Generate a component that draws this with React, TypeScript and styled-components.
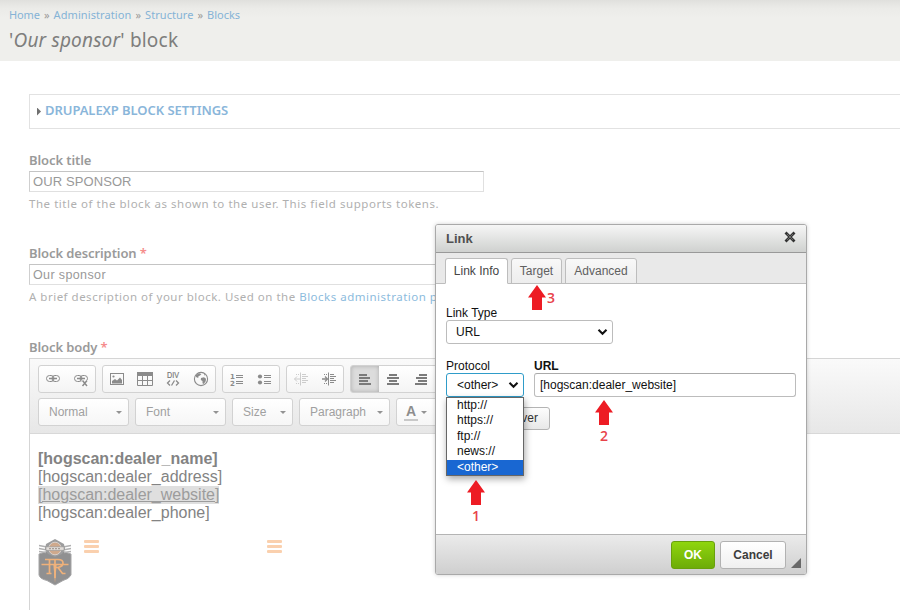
import React from 'react';
import styled, { createGlobalStyle, css } from 'styled-components';

const GlobalStyle = createGlobalStyle`
  *, *::before, *::after { box-sizing: border-box; }
  html, body { margin: 0; padding: 0; background: #fff; }
  body { width: 900px; height: 610px; overflow: hidden; }
`;

const humanist = `"Noto Sans", "Open Sans", sans-serif`;
const arial = `"Liberation Sans", Arial, sans-serif`;

/* ---------- page ---------- */

const Page = styled.div`
  position: relative;
  width: 900px;
  height: 610px;
  overflow: hidden;
  background: #fff;
  font-family: ${humanist};
  white-space: nowrap;
`;

const Header = styled.header`
  height: 61px;
  padding: 7px 9px 0;
  background: linear-gradient(#e0e0dd 0, #ebebe8 8px, #efefec 18px);
`;

const Breadcrumb = styled.nav`
  display: flex;
  gap: 4px;
  height: 15px;
  font-size: 11px;
  line-height: 15px;
  color: #9b9b99;
`;

const Crumb = styled.a<{ $spacing: number }>`
  color: #85b3d6;
  letter-spacing: ${(p) => p.$spacing}px;
`;

const PageTitle = styled.h1`
  margin: 5px 0 0;
  font-size: 19px;
  font-weight: 400;
  line-height: 27px;
  letter-spacing: 0.2px;
  color: #7e7e7d;
`;

const Form = styled.main`
  display: flex;
  flex-direction: column;
  padding: 33px 0 0 29px;
`;

const Fieldset = styled.section`
  display: flex;
  align-items: center;
  gap: 4px;
  height: 35px;
  padding: 0 0 3px 7px;
  border: 1px solid #e2e2e2;
  border-right: 0;
`;

const Triangle = styled.span`
  width: 4px;
  height: 8px;
  margin-top: 3px;
  background: #6f6f6f;
  clip-path: polygon(0 0, 100% 50%, 0 100%);
`;

const Legend = styled.span`
  font-size: 13px;
  font-weight: 600;
  line-height: 18px;
  letter-spacing: -0.06px;
  color: #8ab6da;
`;

const Field = styled.div<{ $gap: number }>`
  display: flex;
  flex-direction: column;
  margin-top: ${(p) => p.$gap}px;
`;

const Label = styled.label`
  height: 20px;
  font-size: 13px;
  font-weight: 600;
  line-height: 18px;
  letter-spacing: -0.1px;
  color: #9a9a9a;
`;

const Required = styled.span`
  color: #f58c8c;
`;

const TextInput = styled.div<{ $size: number; $spacing: number; $drop?: number }>`
  width: 455px;
  height: 21px;
  padding: ${(p) => p.$drop ?? 0}px 0 0 3px;
  border: 1px solid #e0e0e0;
  border-top-color: #c4c4c4;
  border-left-color: #cfcfcf;
  font: ${(p) => p.$size}px/19px ${arial};
  letter-spacing: ${(p) => p.$spacing}px;
  color: #999;
`;

const Description = styled.p<{ $spacing: number }>`
  height: 18px;
  margin: 3px 0 0;
  font-size: 11.5px;
  line-height: 18px;
  letter-spacing: ${(p) => p.$spacing}px;
  color: #b0b0b0;
`;

const DescLink = styled.a`
  color: #8cbbdd;
`;

/* ---------- rich text editor ---------- */

const Editor = styled.section`
  height: 300px;
  border: 1px solid #d5d5d5;
  border-right: 0;
`;

const ToolbarArea = styled.div`
  display: flex;
  flex-direction: column;
  gap: 5px;
  height: 75px;
  padding: 6px 8px 0;
  border-bottom: 1px solid #d8d8d8;
  background: linear-gradient(#fafafa, #e7e7e7);
`;

const ToolbarRow = styled.div`
  display: flex;
  gap: 6px;
  height: 28px;
`;

const ToolGroup = styled.div`
  display: flex;
  height: 28px;
  border: 1px solid #d2d2d2;
  border-radius: 3px;
  background: linear-gradient(#fff, #f4f4f4);
  overflow: hidden;
`;

const ToolButton = styled.span<{ $active?: boolean; $disabled?: boolean }>`
  display: flex;
  width: 28px;
  height: 26px;
  align-items: center;
  justify-content: center;
  opacity: ${(p) => (p.$disabled ? 0.4 : 1)};
  ${(p) =>
    p.$active &&
    css`
      background: #dcdcdc;
      box-shadow: inset 0 0 4px #aaa;
    `}
`;

const Combo = styled.div<{ $width: number }>`
  display: flex;
  align-items: center;
  justify-content: space-between;
  width: ${(p) => p.$width}px;
  height: 28px;
  padding: 0 6px 1px 10px;
  border: 1px solid #d2d2d2;
  border-radius: 3px;
  background: linear-gradient(#fff, #f6f6f6);
  font: 12px/26px ${arial};
  color: #a0a0a0;
`;

const ColorButton = styled(Combo)`
  justify-content: flex-start;
  gap: 3px;
  padding-left: 7px;
`;

const ColorLetter = styled.span`
  width: 14px;
  height: 18px;
  margin-top: 1px;
  border-bottom: 2px solid #c8c8c8;
  font: bold 14px/16px ${arial};
  text-align: center;
  color: #8d8d8d;
`;

const Caret = styled.span`
  margin-top: 2px;
  border: 3px solid transparent;
  border-top-color: #939393;
  border-bottom: 0;
`;

const EditorBody = styled.div`
  padding: 16px 8px;
  font: 16px/18px ${arial};
  color: #838383;
`;

const Line = styled.div<{ $bold?: boolean }>`
  height: 18px;
  font-weight: ${(p) => (p.$bold ? 700 : 400)};
`;

const SelectedText = styled.span`
  display: inline-block;
  height: 18px;
  background: #dfdfdf;
  color: #9c9c9c;
  text-decoration: underline;
`;

const MediaRow = styled.div`
  display: flex;
  align-items: flex-start;
  padding-top: 17px;
`;

const Burger = styled.span<{ $left: number }>`
  display: flex;
  flex-direction: column;
  gap: 2px;
  margin: 1px 0 0 ${(p) => p.$left}px;
`;

const BurgerBar = styled.i`
  width: 15px;
  height: 3px;
  border-radius: 1px;
  background: #fad0ae;
`;

/* ---------- dialog ---------- */

const Dialog = styled.section`
  position: absolute;
  left: 435px;
  top: 224px;
  display: flex;
  flex-direction: column;
  width: 372px;
  height: 351px;
  border: 1px solid #a9a9a9;
  border-radius: 3px;
  background: #fff;
  box-shadow: 0 0 4px rgba(0, 0, 0, 0.18);
  font: 12px/14px ${arial};
  color: #111;
`;

const DialogTitle = styled.header`
  display: flex;
  justify-content: space-between;
  height: 28px;
  padding: 6px 10px 0 10px;
  border-bottom: 1px solid #999;
  border-radius: 2px 2px 0 0;
  background: linear-gradient(#f6f6f6, #cfd1cf);
  font-size: 13px;
  font-weight: 700;
  line-height: 16px;
  color: #505050;
`;

const TabBar = styled.nav`
  display: flex;
  align-items: flex-end;
  gap: 3px;
  height: 31px;
  padding-left: 9px;
  background: #e9e9e9;
  box-shadow: inset 0 -1px #bdbdbd;
`;

const Tab = styled.span<{ $width: number; $active?: boolean }>`
  width: ${(p) => p.$width}px;
  height: 26px;
  border: 1px solid #bdbdbd;
  border-bottom-color: ${(p) => (p.$active ? '#fff' : '#bdbdbd')};
  border-radius: 3px 3px 0 0;
  background: ${(p) => (p.$active ? '#fff' : 'linear-gradient(#f8f8f8, #ededed)')};
  line-height: 24px;
  text-align: center;
  color: ${(p) => (p.$active ? '#454545' : '#606060')};
`;

const DialogBody = styled.div`
  display: flex;
  flex: 1;
  flex-direction: column;
  align-items: flex-start;
  padding: 22px 10px 0;
`;

const FieldName = styled.div<{ $strong?: boolean }>`
  height: 14px;
  font-weight: ${(p) => (p.$strong ? 700 : 400)};
  color: #111;
`;

const SelectBox = styled.div<{ $width: number; $focus?: boolean }>`
  display: flex;
  align-items: center;
  justify-content: space-between;
  width: ${(p) => p.$width}px;
  height: 24px;
  padding: 0 4px 0 ${(p) => (p.$focus ? 10 : 9)}px;
  border: 1px solid ${(p) => (p.$focus ? '#2f9cc9' : '#bcbcbc')};
  border-radius: 3px;
  background: #fff;
`;

const FieldRow = styled.div`
  display: flex;
  gap: 10px;
  margin-top: 15px;
`;

const UrlInput = styled.div`
  width: 262px;
  height: 24px;
  padding-left: 5px;
  border: 1px solid #bcbcbc;
  border-top-color: #aaa;
  border-radius: 3px;
  line-height: 22px;
`;

const BrowseButton = styled.span`
  width: 104px;
  height: 23px;
  margin-top: 10px;
  padding-right: 11px;
  border: 1px solid #b4b4b4;
  border-radius: 3px;
  background: linear-gradient(#fdfdfd, #e8e8e8);
  line-height: 20px;
  text-align: right;
  color: #333;
`;

const DialogFooter = styled.footer`
  display: flex;
  justify-content: flex-end;
  height: 40px;
  padding: 6px 5px 0 0;
  border-top: 1px solid #b4b4b4;
  border-radius: 0 0 2px 2px;
  background: linear-gradient(#ebebeb, #cfcfcf);
`;

const FooterButton = styled.button<{ $primary?: boolean }>`
  width: ${(p) => (p.$primary ? 44 : 66)}px;
  height: 28px;
  margin: 0 5px 0 0;
  padding: 0 0 1px;
  border: 1px solid ${(p) => (p.$primary ? '#69a00d' : '#b2b2b2')};
  border-radius: 3px;
  background: ${(p) => (p.$primary ? 'linear-gradient(#8fd50d, #6dac08)' : 'linear-gradient(#fff, #f0f0f0)')};
  font: bold 12px/24px ${arial};
  color: ${(p) => (p.$primary ? '#fff' : '#3d3d3d')};
`;

const Resizer = styled.span`
  align-self: flex-end;
  width: 10px;
  height: 10px;
  margin-bottom: 6px;
  background: #696969;
  clip-path: polygon(100% 0, 100% 100%, 0 100%);
`;

const OptionList = styled.div`
  position: absolute;
  left: 446px;
  top: 397px;
  width: 78px;
  height: 79px;
  border: 1px solid #666;
  background: #fff;
  box-shadow: 1px 3px 7px rgba(0, 0, 0, 0.35);
  font: 12px/15.4px ${arial};
  color: #111;
`;

const Option = styled.div<{ $selected?: boolean }>`
  height: 15.4px;
  padding-left: 10px;
  background: ${(p) => (p.$selected ? '#1967d2' : 'transparent')};
  color: ${(p) => (p.$selected ? '#fff' : '#111')};
`;

/* ---------- red call-outs ---------- */

const Callout = styled.div<{ $x: number; $y: number; $beside?: boolean }>`
  position: absolute;
  left: ${(p) => p.$x}px;
  top: ${(p) => p.$y}px;
  display: flex;
  flex-direction: ${(p) => (p.$beside ? 'row' : 'column')};
  align-items: center;
  gap: ${(p) => (p.$beside ? 1 : 2)}px;
  font: 600 14px/18px "Open Sans", sans-serif;
  color: #e8434a;
`;

const Arrow = () => (
  <svg width="18" height="25" viewBox="0 0 18 25">
    <path d="M9 0 18 12.5H14V25H4V12.5H0Z" fill="#ed1c24" />
  </svg>
);

const Chevron = () => (
  <svg width="11" height="8" viewBox="0 0 11 8" fill="none">
    <path d="M1.5 1.8 5.5 5.7 9.5 1.8" stroke="#111" strokeWidth="2.1" />
  </svg>
);

const CloseIcon = () => (
  <svg width="12" height="12" viewBox="0 0 12 12">
    <path d="M2.5 2.5 9.5 9.5M9.5 2.5 2.5 9.5" stroke="#333" strokeWidth="2.8" strokeLinecap="square" />
    <path d="M3 3 9 9M9 3 3 9" stroke="#6b6b6b" strokeWidth="1" />
  </svg>
);

/* ---------- toolbar glyphs ---------- */

const Glyph = ({ children }: { children: React.ReactNode }) => (
  <svg width="16" height="16" viewBox="0 0 16 16" fill="none" stroke="#8b8b8b" strokeWidth="1">
    {children}
  </svg>
);

const LinkIcon = ({ broken = false }: { broken?: boolean }) => (
  <Glyph>
    <rect x="1.5" y="4.5" width="7.5" height="6" rx="3" />
    <rect x="7" y="4.5" width="7.5" height="6" rx="3" />
    <path d="M4 7.5H12" strokeWidth="1.6" />
    {broken && (
      <>
        <path d="M8.5 9H16V16H8.5Z" fill="#fafafa" stroke="none" />
        <path d="m9.5 9.5 4.5 5.5M14 9.500l-4.500 5.500" strokeWidth="1.5" />
      </>
    )}
  </Glyph>
);

const ImageIcon = () => (
  <Glyph>
    <rect x="1.5" y="2.5" width="13" height="11" />
    <path d="M3 12.5V10l3-2 2 1.5 3-3 2 2.5v3.5Z" fill="#8b8b8b" stroke="none" />
    <circle cx="4.5" cy="5.5" r="1.1" fill="#8b8b8b" stroke="none" />
  </Glyph>
);

const TableIcon = () => (
  <Glyph>
    <path d="M.5 2.5h15v12H.5ZM.5 6.5M.5 9.5h15M5.500 5v9.500M10.500 5v9.500" />
    <path d="M0 1h16v4H0Z" fill="#8b8b8b" stroke="none" />
  </Glyph>
);

const DivIcon = () => (
  <Glyph>
    <text x="8" y="7" textAnchor="middle" textLength="12" lengthAdjust="spacingAndGlyphs" fontFamily="Liberation Sans" fontSize="9" fill="#777" stroke="#777" strokeWidth=".2">
      DIV
    </text>
    <path d="M5 9.5 2.5 12 5 14.5M11 9.5 13.5 12 11 14.5M9.500 9.500l-3 5" strokeWidth="1.3" />
  </Glyph>
);

const GlobeIcon = () => (
  <Glyph>
    <circle cx="8" cy="8" r="6.6" strokeWidth="1.1" />
    <path d="M3 4 6 2.300l2.500.7L7 4.500 5.500 5.200 5.200 7 3 6ZM8 7l3-.8 2 1.500-.3 2.600-2 2.700-1.200-.8V10L7.800 9ZM11 2.800l1.500 1.200-1.200.5Z" fill="#8b8b8b" stroke="none" />
  </Glyph>
);

const ListIcon = ({ ordered = false }: { ordered?: boolean }) => (
  <Glyph>
    <path d="M7 4.5h7M7 6.5h7M7 10.5h7M7 12.5h7" />
    {ordered ? (
      <g fontFamily="DejaVu Sans" fontSize="7" fontWeight="700" fill="#8b8b8b" stroke="none">
        <text x="1" y="7.5">1</text>
        <text x="1" y="15">2</text>
      </g>
    ) : (
      <g fill="#8b8b8b" stroke="none">
        <circle cx="3" cy="5.5" r="2.1" />
        <circle cx="3" cy="11.5" r="2.1" />
      </g>
    )}
  </Glyph>
);

const IndentIcon = ({ flip = false }: { flip?: boolean }) => (
  <Glyph>
    <path d="M7.5 1.5v13M9 3.5h4M9 5.5h6M9 7.5h4M9 9.5h6M9 11.5h4" />
    <path d="M3 3.5h3M3 12.5h3" strokeDasharray="1 1" />
    {flip ? <path d="M7 8H1.5M4 5.5 1.5 8 4 10.5" /> : <path d="M1 8h5.5M4 5.5 6.5 8 4 10.5" strokeWidth="1.3" />}
  </Glyph>
);

const alignPaths = {
  left: 'M2 3h8M2 6h11M2 9h9M2 12h12',
  center: 'M4 3h8M2 6h12M4 9h8M2 12h12',
  right: 'M6 3h8M3 6h11M5 9h9M2 12h12',
};

const AlignIcon = ({ side }: { side: keyof typeof alignPaths }) => (
  <Glyph>
    <path d={alignPaths[side]} stroke="#7b7b7b" strokeWidth="1.8" transform="translate(0 1)" />
  </Glyph>
);

const Emblem = () => (
  <svg width="34" height="47" viewBox="0 0 34 47" fill="none">
    <path d="M1 15 9 12.5Q17 19 25 12.5l8 2.5v21q-2 4-8 5.500L17 46l-8-4.500Q2 40 1 36Z" fill="#909091" stroke="#a5a5a6" />
    <path d="M1 6.500 9 8M1 9.500 9 11M1 12.500l7 1M33 6.500 25 8M33 9.500 25 11M33 12.500l-7 1" stroke="#b0b0b1" strokeWidth="1.4" />
    <path d="M8 5 17 0l9 5 1 5-3 5-7 3-7-3-3-5Z" fill="#9d9d9e" />
    <circle cx="17" cy="9.5" r="6.3" fill="#cfa98c" stroke="#dfdbd8" strokeWidth=".8" />
    <path d="M8 7.800h18v3.600H8Z" fill="#e2ddd9" stroke="#929292" strokeWidth=".6" />
    <path d="M11 9.600h12" stroke="#a79d96" strokeWidth="1.3" strokeDasharray="2 1" />
    <path d="M3.5 25.5h27M7 20.500h13q5 0 5 3.500t-5 4.500h-3M11.500 21v13M8.500 34.500h5M17 21v18M20 28.500l4.500 6h3" stroke="#efb17a" strokeWidth="1.7" />
    <path d="M15.3 25h3.400L17 44Z" fill="#efb27c" />
  </svg>
);

const BurgerIcon = ({ left }: { left: number }) => (
  <Burger $left={left}>
    <BurgerBar />
    <BurgerBar />
    <BurgerBar />
  </Burger>
);

export default function App() {
  return (
    <>
      <GlobalStyle />
      <Page>
        <Header>
          <Breadcrumb>
            <Crumb $spacing={-0.1}>Home</Crumb>»<Crumb $spacing={0.1}>Administration</Crumb>»
            <Crumb $spacing={0.05}>Structure</Crumb>»<Crumb $spacing={0}>Blocks</Crumb>
          </Breadcrumb>
          <PageTitle>
            '<em>Our sponsor</em>' block
          </PageTitle>
        </Header>

        <Form>
          <Fieldset>
            <Triangle />
            <Legend>DRUPALEXP BLOCK SETTINGS</Legend>
          </Fieldset>

          <Field $gap={22}>
            <Label>Block title</Label>
            <TextInput $size={13} $spacing={0.1}>OUR SPONSOR</TextInput>
            <Description $spacing={0.54}>
              The title of the block as shown to the user. This field supports tokens.
            </Description>
          </Field>

          <Field $gap={31}>
            <Label>
              Block description <Required>*</Required>
            </Label>
            <TextInput $size={12.5} $spacing={0.38} $drop={1}>Our sponsor</TextInput>
            <Description $spacing={0.5}>
              A brief description of your block. Used on the <DescLink>Blocks administration page</DescLink>.
            </Description>
          </Field>

          <Field $gap={32}>
            <Label>
              Block body <Required>*</Required>
            </Label>
            <Editor>
              <ToolbarArea>
                <ToolbarRow>
                  <ToolGroup>
                    <ToolButton><LinkIcon /></ToolButton>
                    <ToolButton><LinkIcon broken /></ToolButton>
                  </ToolGroup>
                  <ToolGroup>
                    <ToolButton><ImageIcon /></ToolButton>
                    <ToolButton><TableIcon /></ToolButton>
                    <ToolButton><DivIcon /></ToolButton>
                    <ToolButton><GlobeIcon /></ToolButton>
                  </ToolGroup>
                  <ToolGroup>
                    <ToolButton><ListIcon ordered /></ToolButton>
                    <ToolButton><ListIcon /></ToolButton>
                  </ToolGroup>
                  <ToolGroup>
                    <ToolButton $disabled><IndentIcon flip /></ToolButton>
                    <ToolButton><IndentIcon /></ToolButton>
                  </ToolGroup>
                  <ToolGroup>
                    <ToolButton $active><AlignIcon side="left" /></ToolButton>
                    <ToolButton><AlignIcon side="center" /></ToolButton>
                    <ToolButton><AlignIcon side="right" /></ToolButton>
                    <ToolButton />
                  </ToolGroup>
                </ToolbarRow>
                <ToolbarRow>
                  <Combo $width={91}>Normal<Caret /></Combo>
                  <Combo $width={91}>Font<Caret /></Combo>
                  <Combo $width={61}>Size<Caret /></Combo>
                  <Combo $width={91}>Paragraph<Caret /></Combo>
                  <ColorButton $width={72}>
                    <ColorLetter>A</ColorLetter>
                    <Caret />
                  </ColorButton>
                </ToolbarRow>
              </ToolbarArea>
              <EditorBody>
                <Line $bold>[hogscan:dealer_name]</Line>
                <Line>[hogscan:dealer_address]</Line>
                <Line><SelectedText>[hogscan:dealer_website]</SelectedText></Line>
                <Line>[hogscan:dealer_phone]</Line>
                <MediaRow>
                  <Emblem />
                  <BurgerIcon left={12} />
                  <BurgerIcon left={168} />
                </MediaRow>
              </EditorBody>
            </Editor>
          </Field>
        </Form>

        <Dialog>
          <DialogTitle>
            Link
            <CloseIcon />
          </DialogTitle>
          <TabBar>
            <Tab $width={63} $active>Link Info</Tab>
            <Tab $width={51}>Target</Tab>
            <Tab $width={72}>Advanced</Tab>
          </TabBar>
          <DialogBody>
            <FieldName>Link Type</FieldName>
            <SelectBox $width={167}>URL<Chevron /></SelectBox>
            <FieldRow>
              <div>
                <FieldName>Protocol</FieldName>
                <SelectBox $width={78} $focus>&lt;other&gt;<Chevron /></SelectBox>
              </div>
              <div>
                <FieldName $strong>URL</FieldName>
                <UrlInput>[hogscan:dealer_website]</UrlInput>
              </div>
            </FieldRow>
            <BrowseButton>Browse Server</BrowseButton>
          </DialogBody>
          <DialogFooter>
            <FooterButton $primary>OK</FooterButton>
            <FooterButton>Cancel</FooterButton>
            <Resizer />
          </DialogFooter>
        </Dialog>

        <OptionList>
          <Option>http://</Option>
          <Option>https://</Option>
          <Option>ftp://</Option>
          <Option>news://</Option>
          <Option $selected>&lt;other&gt;</Option>
        </OptionList>

        <Callout $x={467} $y={480}><Arrow />1</Callout>
        <Callout $x={595} $y={400}><Arrow />2</Callout>
        <Callout $x={528} $y={285} $beside><Arrow />3</Callout>
      </Page>
    </>
  );
}
